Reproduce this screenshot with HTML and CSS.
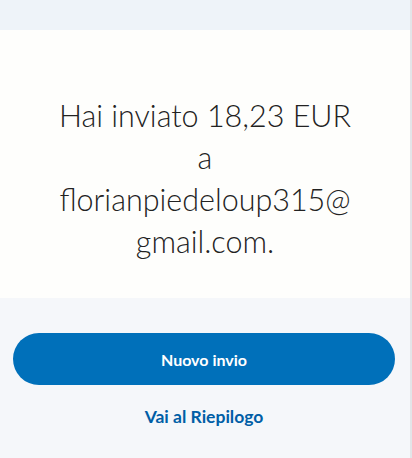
FILE: index.html
```html
<!DOCTYPE html>
<html lang="it">
<head>
<meta charset="UTF-8">
<meta name="viewport" content="width=device-width, initial-scale=1.0">
<title>Invio completato</title>
<link rel="stylesheet" href="styles.css">
</head>
<body>

<div class="page">
    <div class="top-band"></div>

    <div class="result-card">
        <p class="result-msg">Hai inviato 18,23 EUR<br>a<br>florianpiedeloup315@<br>gmail.com.</p>
    </div>

    <div class="actions">
        <button class="btn-primary">Nuovo invio</button>
        <a href="#" class="link-summary">Vai al Riepilogo</a>
    </div>
</div>

</body>
</html>
```

FILE: styles.css
```css
body {
    margin: 0;
    font-family: Lato, "Noto Sans", sans-serif;
    background-color: #f5f7fa;
}

.page {
    width: 410px;
    height: 458px;
    border-right: 2px solid #e3e5e8;
    display: flex;
    flex-direction: column;
}

.top-band {
    height: 30px;
    background-color: #eef3f9;
}

.result-card {
    height: 268px;
    background-color: #fefefc;
    display: flex;
    align-items: center;
    justify-content: center;
}

.result-msg {
    margin: 0;
    padding-top: 28px;
    font-size: 30.5px;
    font-weight: 300;
    line-height: 42px;
    color: #222;
    text-align: center;
}

.actions {
    flex: 1;
    display: flex;
    flex-direction: column;
    align-items: center;
    padding-top: 35px;
}

.btn-primary {
    width: 382px;
    height: 52px;
    margin-left: -2px;
    padding: 0;
    font-family: inherit;
    font-size: 16px;
    font-weight: 700;
    color: #fff;
    background-color: #0070ba;
    border: none;
    border-radius: 26px;
    cursor: pointer;
}

.link-summary {
    margin-top: 21px;
    margin-left: -2px;
    font-size: 17.5px;
    font-weight: 700;
    color: #005ea6;
    text-decoration: none;
}
```
